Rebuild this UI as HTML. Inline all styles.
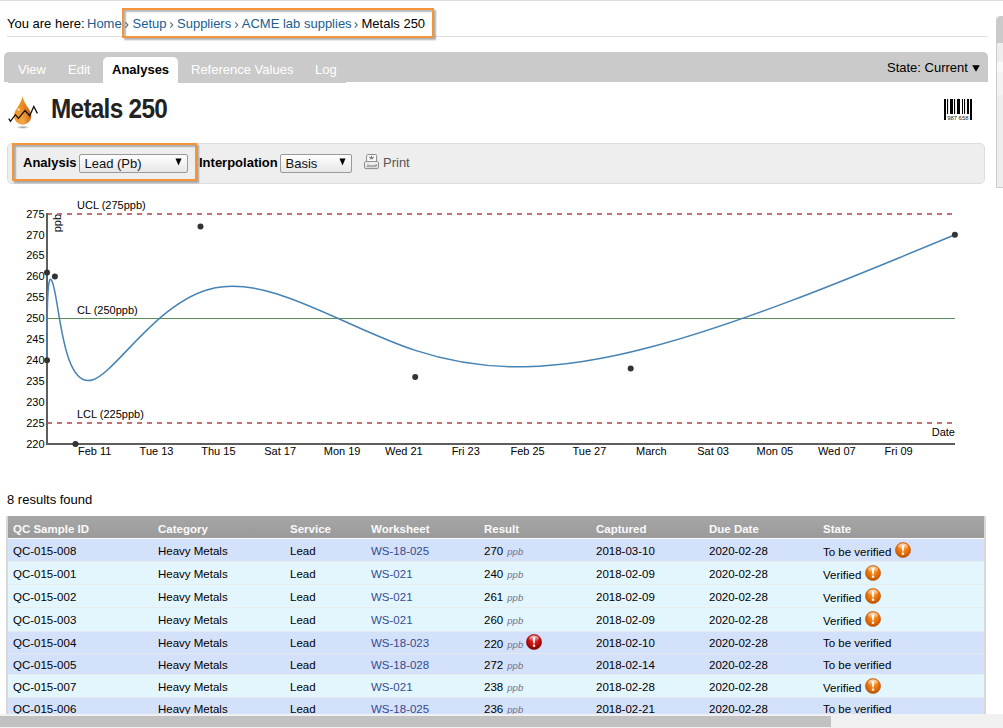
<!DOCTYPE html>
<html><head><meta charset="utf-8">
<style>
html,body{margin:0;padding:0;background:#fff;}
body{width:1003px;height:728px;overflow:hidden;position:relative;font-family:"Liberation Sans",sans-serif;color:#000;}
.a{position:absolute;white-space:nowrap;}
.link{color:#205c90;}
.sep{color:#888;}
.tabtxt{font-size:13px;color:#fff;}
.hl{position:absolute;border:2px solid #f4953a;box-shadow:2px 2px 1.5px rgba(0,0,0,.3), inset 2px 2px 1.5px rgba(0,0,0,.28);}
table{border-collapse:collapse;}
.th{background:linear-gradient(#a6a6a6,#9a9a9a);}
.th span{position:absolute;top:6px;font-size:11.5px;line-height:14px;font-weight:bold;color:#fafafa}
.tr span{position:absolute;font-size:11.5px;line-height:14px;color:#000}
.tr em{font-size:9.6px;color:#6d7388;margin-left:0.9px}
.tr .lk{color:#344c94}
.tr .ic{position:absolute}
.b{background:#d4e1fa;border-top:1px solid #e6e8ee;box-sizing:border-box}
.c{background:#e4f6fd;border-top:1px solid #e9ecec;box-sizing:border-box}
.sel{border:1px solid #aaa;border-radius:2px;background:linear-gradient(#fff,#e6e6e6);font-size:13px;}
.sel span{position:absolute;top:1px;line-height:16px;color:#111}
.sel .tri{position:absolute}
.sel{border-color:#9a9a9a}
</style></head>
<body>
<!-- top line -->
<div class="a" style="left:0;top:0;width:1003px;height:1px;background:#ddd"></div>

<!-- breadcrumb -->
<div class="a" style="left:7px;top:16px;font-size:13px;line-height:16px;">You are here:</div>
<div class="a link" style="left:87px;top:16px;font-size:13px;line-height:16px;">Home</div>
<div class="a link" style="left:132.5px;top:16px;font-size:13px;line-height:16px;">Setup</div>
<div class="a link" style="left:177px;top:16px;font-size:13px;line-height:16px;">Suppliers</div>
<div class="a link" style="left:241.8px;top:16px;font-size:13px;line-height:16px;">ACME lab supplies</div>
<div class="a" style="left:361.5px;top:16px;font-size:13px;line-height:16px;">Metals 250</div>
<svg class="a" style="left:0;top:0" width="440" height="40"><polyline points="125.5,22.4 127.9,25 125.5,27.6" fill="none" stroke="#5a6070" stroke-width="1.1"/><polyline points="170.3,22.4 172.7,25 170.3,27.6" fill="none" stroke="#5a6070" stroke-width="1.1"/><polyline points="235.3,22.4 237.7,25 235.3,27.6" fill="none" stroke="#5a6070" stroke-width="1.1"/><polyline points="354.8,22.4 357.2,25 354.8,27.6" fill="none" stroke="#5a6070" stroke-width="1.1"/></svg>
<div class="a" style="left:7px;top:36px;width:981px;height:1px;background:#ddd"></div>

<!-- tabs -->
<div class="a" style="left:4px;top:52px;width:984px;height:30px;background:#cacaca;border-radius:5px 5px 0 0"></div>
<div class="a" style="left:8px;top:82px;width:338px;height:1px;background:#cacaca"></div>
<div class="a" style="left:103px;top:57px;width:75px;height:26px;background:#fff;border-radius:5px 5px 0 0"></div>
<div class="a tabtxt" style="left:18px;top:62px;line-height:16px">View</div>
<div class="a tabtxt" style="left:68px;top:62px;line-height:16px">Edit</div>
<div class="a" style="left:112px;top:62px;line-height:16px;font-size:13px;font-weight:bold;color:#000">Analyses</div>
<div class="a tabtxt" style="left:191px;top:62px;line-height:16px">Reference Values</div>
<div class="a tabtxt" style="left:315px;top:62px;line-height:16px">Log</div>
<div class="a" style="left:887px;top:60px;line-height:16px;font-size:13px;color:#000">State: Current</div>
<svg class="a" style="left:972px;top:65px" width="8" height="7"><polygon points="0.2,0.3 7.8,0.3 4,6.8" fill="#000"/></svg>

<!-- right partial panel -->
<div class="a" style="left:996px;top:16px;width:20px;height:170px;border:1px solid #ccc;border-radius:4px 0 0 0;background:#eee;overflow:hidden">
  <div style="height:26px;background:#cacaca"></div>
  <div style="height:19px;background:#eee"></div>
  <div style="height:10px;background:#f9f9f9"></div><div style="height:23px;background:#f3f3f3"></div>
</div>

<!-- title -->
<svg class="a" style="left:0;top:90px" width="45" height="40" viewBox="0 90 45 40">
  <defs>
    <linearGradient id="dg" x1="0" y1="0" x2="1" y2="0.3">
      <stop offset="0" stop-color="#f6a53c"/>
      <stop offset="0.5" stop-color="#ee8d22"/>
      <stop offset="1" stop-color="#d06614"/>
    </linearGradient>
    <radialGradient id="dg2" cx="0.5" cy="0.9" r="0.5">
      <stop offset="0" stop-color="#f7b35a" stop-opacity="0.8"/>
      <stop offset="1" stop-color="#f7b35a" stop-opacity="0"/>
    </radialGradient>
    <radialGradient id="sh" cx="0.5" cy="0.5" r="0.5">
      <stop offset="0" stop-color="#999"/>
      <stop offset="1" stop-color="#999" stop-opacity="0"/>
    </radialGradient>
  </defs>
  <ellipse cx="23" cy="127.3" rx="7" ry="1.6" fill="url(#sh)"/>
  <path d="M22.5,96.3 C23.5,101 26,105 28.5,108.5 C30.5,111 31.3,113.5 31.3,116 C31.3,120.8 27.5,124.5 22.7,124.5 C17.9,124.5 14,120.8 14,116 C14,113.5 14.8,111 16.8,108.5 C19.3,105 21.5,101 22.5,96.3Z" fill="url(#dg)"/>
  <path d="M22.5,96.3 C23.5,101 26,105 28.5,108.5 C30.5,111 31.3,113.5 31.3,116 C31.3,120.8 27.5,124.5 22.7,124.5 C17.9,124.5 14,120.8 14,116 C14,113.5 14.8,111 16.8,108.5 C19.3,105 21.5,101 22.5,96.3Z" fill="url(#dg2)"/>
  <ellipse cx="18.8" cy="109.6" rx="1.4" ry="1.1" fill="#fff" opacity="0.75"/>
  <path d="M8.8,118.6 L10.4,121.3 L15.4,114.7 L18.4,118.3 L25,110.6 L29.7,115.8 L33.8,106.5 L37.4,113.4" fill="none" stroke="#111" stroke-width="1.3" stroke-linejoin="miter"/>
</svg>
<div class="a" style="left:51px;top:94px;font-size:27.5px;line-height:30px;font-weight:bold;color:#222;letter-spacing:-0.8px;transform:scaleX(0.885);transform-origin:0 0">Metals 250</div>

<!-- barcode -->
<svg class="a" style="left:940px;top:95px" width="40" height="30" viewBox="940 95 40 30">
  <g fill="#000">
    <rect x="944" y="99" width="2" height="21"/>
    <rect x="947" y="99" width="1.1" height="15"/>
    <rect x="950" y="99" width="3" height="15"/>
    <rect x="954" y="99" width="1.1" height="15"/>
    <rect x="957" y="99" width="3" height="15"/>
    <rect x="962" y="99" width="1" height="15"/>
    <rect x="964" y="99" width="1.1" height="15"/>
    <rect x="967" y="99" width="2" height="15"/>
    <rect x="970" y="99" width="2" height="21"/>
  </g>
  <text x="957.8" y="119.6" font-size="5.9" text-anchor="middle" font-family="Liberation Sans" fill="#222">987 658</text>
</svg>

<!-- filter panel -->
<div class="a" style="left:7px;top:143px;width:976px;height:39px;background:#eee;border:1px solid #ddd;border-radius:5px"></div>

<!-- filter contents -->
<div class="a" style="left:23px;top:155px;font-size:13px;line-height:16px;font-weight:bold">Analysis</div>
<div class="a sel" style="left:79px;top:154px;width:107px;height:17px;"><span style="left:4.5px">Lead (Pb)</span><svg class="tri" style="left:95px;top:2.8px" width="7" height="8"><polygon points="0.5,0.5 6.5,0.5 3.5,7.5" fill="#000"/></svg></div>
<div class="a" style="left:199px;top:155px;font-size:13px;line-height:16px;font-weight:bold">Interpolation</div>
<div class="a sel" style="left:280px;top:154px;width:70px;height:17px;"><span style="left:4.5px">Basis</span><svg class="tri" style="left:58px;top:2.8px" width="7" height="8"><polygon points="0.5,0.5 6.5,0.5 3.5,7.5" fill="#000"/></svg></div>
<svg class="a" style="left:363px;top:153px" width="17" height="17" viewBox="0 0 17 17">
  <defs><linearGradient id="pg" x1="0" y1="0" x2="0" y2="1"><stop offset="0" stop-color="#fafafa"/><stop offset="1" stop-color="#d8d8d8"/></linearGradient></defs>
  <rect x="3.6" y="1.5" width="10" height="8" rx="1" fill="#fafafa" stroke="#8a8a8a" stroke-width="1"/>
  <path d="M8.5,2.8 v3.2 M6,4 l2.5,1.2 l2.5,-1.2 M6.8,6.2 l1.7,-1 l1.7,1" stroke="#777" stroke-width="1" fill="none"/>
  <rect x="1.5" y="8.6" width="14" height="7" rx="1.3" fill="url(#pg)" stroke="#8a8a8a" stroke-width="1"/>
  <path d="M3.8,13 h9.4 v-1.8" stroke="#777" stroke-width="1" fill="none"/>
  <circle cx="5" cy="11" r="0.6" fill="#888"/>
</svg>
<div class="a" style="left:383px;top:155px;font-size:13px;line-height:16px;color:#555">Print</div>

<!-- chart -->
<svg class="a" style="left:0;top:190px" width="1003" height="280" viewBox="0 190 1003 280" font-family="Liberation Sans" font-size="11">
  <g fill="#000" text-anchor="end"><text x="44.5" y="217.6">275</text><text x="44.5" y="238.5">270</text><text x="44.5" y="259.4">265</text><text x="44.5" y="280.3">260</text><text x="44.5" y="301.2">255</text><text x="44.5" y="322.1">250</text><text x="44.5" y="343.0">245</text><text x="44.5" y="363.9">240</text><text x="44.5" y="384.8">235</text><text x="44.5" y="405.7">230</text><text x="44.5" y="426.6">225</text><text x="44.5" y="447.5">220</text></g>
  <g fill="#000" text-anchor="middle"><text x="94.7" y="454.8">Feb 11</text><text x="156.5" y="454.8">Tue 13</text><text x="218.4" y="454.8">Thu 15</text><text x="280.2" y="454.8">Sat 17</text><text x="342.1" y="454.8">Mon 19</text><text x="403.9" y="454.8">Wed 21</text><text x="465.7" y="454.8">Fri 23</text><text x="527.6" y="454.8">Feb 25</text><text x="589.4" y="454.8">Tue 27</text><text x="651.3" y="454.8">March</text><text x="713.1" y="454.8">Sat 03</text><text x="774.9" y="454.8">Mon 05</text><text x="836.8" y="454.8">Wed 07</text><text x="898.6" y="454.8">Fri 09</text></g>
  <text x="955" y="435.8" text-anchor="end">Date</text>
  <text transform="translate(47,214) rotate(-90)" y="6" dy="7.8" text-anchor="end">ppb</text>
  <line x1="47" y1="214" x2="955" y2="214" stroke="#c27174" stroke-width="2" stroke-dasharray="5,5"/>
  <line x1="47" y1="423" x2="955" y2="423" stroke="#c27174" stroke-width="2" stroke-dasharray="5,5"/>
  <line x1="47" y1="318.5" x2="955" y2="318.5" stroke="#5a8f5a" stroke-width="1"/>
  <text x="77" y="209">UCL (275ppb)</text>
  <text x="77" y="314">CL (250ppb)</text>
  <text x="77" y="418">LCL (225ppb)</text>
  <line x1="47" y1="213" x2="47" y2="445" stroke="#5e5e5e" stroke-width="2"/>
  <line x1="47" y1="444" x2="955" y2="444" stroke="#5e5e5e" stroke-width="2"/>
  <path d="M47.00,360.30L47.00,345.67C47.00,331.03 47.00,301.77 48.32,287.82C49.63,273.87 52.27,275.23 57.02,303.80C61.77,332.37 68.63,388.13 92.90,379.77C117.17,371.40 158.83,298.90 215.45,287.73C272.07,276.57 343.63,326.73 415.33,350.40C487.03,374.07 558.87,371.23 648.82,347.55C738.77,323.87 846.83,279.33 900.87,257.07L954.90,234.80" fill="none" stroke="#4682b4" stroke-width="1.5"/>
  <g fill="#333">
    <circle cx="47" cy="360.3" r="3"/><circle cx="47" cy="272.5" r="3"/><circle cx="54.9" cy="276.6" r="3"/>
    <circle cx="75.5" cy="443.9" r="3"/><circle cx="200.5" cy="226.4" r="3"/><circle cx="415.2" cy="376.9" r="3"/>
    <circle cx="630.7" cy="368.4" r="3"/><circle cx="954.9" cy="234.8" r="3"/>
  </g>
</svg>

<div class="a" style="left:7px;top:492px;font-size:13px;line-height:16px">8 results found</div>
<!-- table -->
<svg width="0" height="0" style="position:absolute"><defs><radialGradient id="og" cx="0.5" cy="0.35" r="0.65"><stop offset="0" stop-color="#ff9a2e"/><stop offset="0.6" stop-color="#e86f05"/><stop offset="1" stop-color="#b95000"/></radialGradient><radialGradient id="rg" cx="0.5" cy="0.35" r="0.65"><stop offset="0" stop-color="#e83030"/><stop offset="0.6" stop-color="#c00d0d"/><stop offset="1" stop-color="#7a0000"/></radialGradient><linearGradient id="hg" x1="0" y1="0" x2="0" y2="1"><stop offset="0" stop-color="#fff" stop-opacity="0.75"/><stop offset="1" stop-color="#fff" stop-opacity="0"/></linearGradient><g id="ico-o"><circle cx="8" cy="8" r="7.6" fill="url(#og)" stroke="#c05a10" stroke-width="0.6"/><ellipse cx="8" cy="4.6" rx="5" ry="3" fill="url(#hg)"/><path d="M6.6,3.2 h2.8 l-0.75,6.3 h-1.3 z" fill="#fff"/><rect x="6.85" y="10.6" width="2.3" height="2.2" fill="#fff"/></g><g id="ico-r"><circle cx="8" cy="8" r="7.6" fill="url(#rg)" stroke="#8a0a0a" stroke-width="0.6"/><ellipse cx="8" cy="4.6" rx="5" ry="3" fill="url(#hg)"/><path d="M6.6,3.2 h2.8 l-0.75,6.3 h-1.3 z" fill="#fff"/><rect x="6.85" y="10.6" width="2.3" height="2.2" fill="#fff"/></g></defs></svg>
<div class="a" style="left:6px;top:516px;width:2px;height:198px;background:#d8d8d8"></div>
<div class="a" style="left:984px;top:516px;width:2px;height:198px;background:#d8d8d8"></div>
<div class="a th" style="left:8px;top:516px;width:976px;height:21.5px"><span style="left:5px">QC Sample ID</span><span style="left:150px">Category</span><span style="left:282px">Service</span><span style="left:363px">Worksheet</span><span style="left:476px">Result</span><span style="left:588px">Captured</span><span style="left:701px">Due Date</span><span style="left:815px">State</span></div>
<div class="a" style="left:8px;top:537.5px;width:976px;height:1.5px;background:#fbfbfb"></div>
<div class="a tr b" style="left:8px;top:539px;width:976px;height:22px;border-top:0;"><span style="left:5px;top:5px">QC-015-008</span><span style="left:150px;top:5px">Heavy Metals</span><span style="left:282px;top:5px">Lead</span><span class="lk" style="left:363px;top:5px">WS-18-025</span><span style="left:476px;top:5px">270 <em>ppb</em></span><span style="left:588px;top:5px">2018-03-10</span><span style="left:701px;top:5px">2020-02-28</span><span style="left:815px;top:6px">To be verified</span><svg class="ic" style="left:887px;top:3px" width="16" height="16" viewBox="0 0 16 16"><use href="#ico-o"/></svg></div>
<div class="a tr c" style="left:8px;top:561px;width:976px;height:23px"><span style="left:5px;top:5px">QC-015-001</span><span style="left:150px;top:5px">Heavy Metals</span><span style="left:282px;top:5px">Lead</span><span class="lk" style="left:363px;top:5px">WS-021</span><span style="left:476px;top:5px">240 <em>ppb</em></span><span style="left:588px;top:5px">2018-02-09</span><span style="left:701px;top:5px">2020-02-28</span><span style="left:815px;top:6px">Verified</span><svg class="ic" style="left:857px;top:2.5px" width="16" height="16" viewBox="0 0 16 16"><use href="#ico-o"/></svg></div>
<div class="a tr c" style="left:8px;top:584px;width:976px;height:23px"><span style="left:5px;top:5px">QC-015-002</span><span style="left:150px;top:5px">Heavy Metals</span><span style="left:282px;top:5px">Lead</span><span class="lk" style="left:363px;top:5px">WS-021</span><span style="left:476px;top:5px">261 <em>ppb</em></span><span style="left:588px;top:5px">2018-02-09</span><span style="left:701px;top:5px">2020-02-28</span><span style="left:815px;top:6px">Verified</span><svg class="ic" style="left:857px;top:2.5px" width="16" height="16" viewBox="0 0 16 16"><use href="#ico-o"/></svg></div>
<div class="a tr c" style="left:8px;top:607px;width:976px;height:24px"><span style="left:5px;top:5px">QC-015-003</span><span style="left:150px;top:5px">Heavy Metals</span><span style="left:282px;top:5px">Lead</span><span class="lk" style="left:363px;top:5px">WS-021</span><span style="left:476px;top:5px">260 <em>ppb</em></span><span style="left:588px;top:5px">2018-02-09</span><span style="left:701px;top:5px">2020-02-28</span><span style="left:815px;top:6px">Verified</span><svg class="ic" style="left:857px;top:3px" width="16" height="16" viewBox="0 0 16 16"><use href="#ico-o"/></svg></div>
<div class="a tr b" style="left:8px;top:631px;width:976px;height:22px"><span style="left:5px;top:4.3px">QC-015-004</span><span style="left:150px;top:4.3px">Heavy Metals</span><span style="left:282px;top:4.3px">Lead</span><span class="lk" style="left:363px;top:4.3px">WS-18-023</span><span style="left:476px;top:5.3px">220 <em>ppb</em></span><span style="left:588px;top:4.3px">2018-02-10</span><span style="left:701px;top:4.3px">2020-02-28</span><span style="left:815px;top:4.3px">To be verified</span><svg class="ic" style="left:518px;top:2px" width="16" height="16" viewBox="0 0 16 16"><use href="#ico-r"/></svg></div>
<div class="a tr b" style="left:8px;top:653px;width:976px;height:21px"><span style="left:5px;top:4.3px">QC-015-005</span><span style="left:150px;top:4.3px">Heavy Metals</span><span style="left:282px;top:4.3px">Lead</span><span class="lk" style="left:363px;top:4.3px">WS-18-028</span><span style="left:476px;top:4.3px">272 <em>ppb</em></span><span style="left:588px;top:4.3px">2018-02-14</span><span style="left:701px;top:4.3px">2020-02-28</span><span style="left:815px;top:4.3px">To be verified</span></div>
<div class="a tr c" style="left:8px;top:674px;width:976px;height:23px"><span style="left:5px;top:5.4px">QC-015-007</span><span style="left:150px;top:5.4px">Heavy Metals</span><span style="left:282px;top:5.4px">Lead</span><span class="lk" style="left:363px;top:5.4px">WS-021</span><span style="left:476px;top:5.4px">238 <em>ppb</em></span><span style="left:588px;top:5.4px">2018-02-28</span><span style="left:701px;top:5.4px">2020-02-28</span><span style="left:815px;top:6.4px">Verified</span><svg class="ic" style="left:857px;top:2.5px" width="16" height="16" viewBox="0 0 16 16"><use href="#ico-o"/></svg></div>
<div class="a tr b" style="left:8px;top:697px;width:976px;height:23px"><span style="left:5px;top:4.4px">QC-015-006</span><span style="left:150px;top:4.4px">Heavy Metals</span><span style="left:282px;top:4.4px">Lead</span><span class="lk" style="left:363px;top:4.4px">WS-18-025</span><span style="left:476px;top:4.4px">236 <em>ppb</em></span><span style="left:588px;top:4.4px">2018-02-21</span><span style="left:701px;top:4.4px">2020-02-28</span><span style="left:815px;top:4.4px">To be verified</span></div>
<div class="a" style="left:0;top:714px;width:1003px;height:14px;background:#f1f1f1"></div>
<div class="a" style="left:0;top:716px;width:831px;height:11px;background:#c1c1c1"></div>

<!-- highlight boxes -->
<div class="hl" style="left:122px;top:8px;width:308px;height:25.8px"></div>
<div class="hl" style="left:12px;top:142.5px;width:181px;height:34.5px"></div>
</body></html>
